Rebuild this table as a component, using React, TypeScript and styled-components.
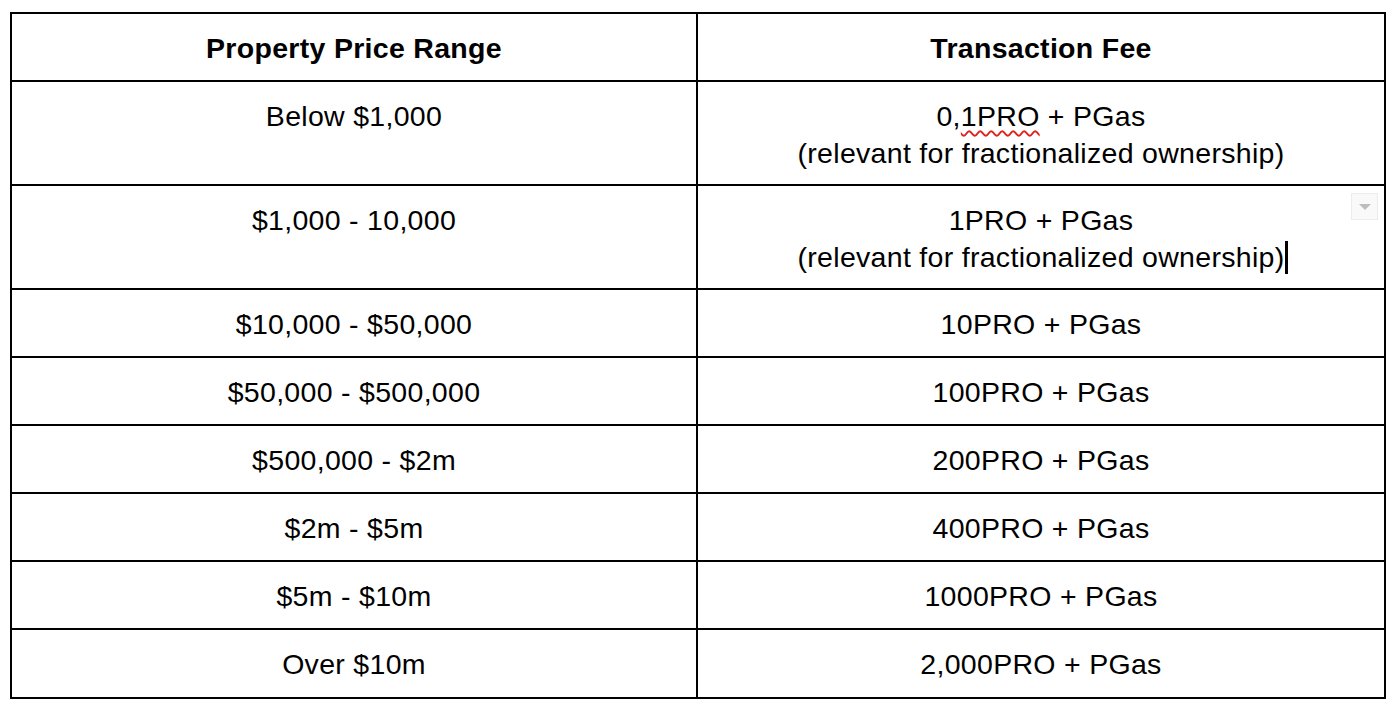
import styled, { createGlobalStyle } from "styled-components";

const Global = createGlobalStyle`
  html, body {
    margin: 0;
    background: #ffffff;
  }
  body {
    font-family: "Liberation Sans", Arial, Helvetica, sans-serif;
    color: #000;
  }
`;

const Page = styled.div`
  padding: 12px 0 0 10px;
`;

const Table = styled.table`
  border-collapse: collapse;
  table-layout: fixed;
  width: 1374px;
  font-size: 28.5px;
  letter-spacing: 0.3px;
  line-height: 37px;
`;

const Row = styled.tr<{ h: number }>`
  height: ${p => p.h}px;
`;

const Cell = styled.td`
  position: relative;
  border: 2px solid #000;
  padding: 16px 4px 0;
  text-align: center;
  vertical-align: top;
  white-space: nowrap;
`;

const HeadCell = styled.th`
  border: 2px solid #000;
  padding: 16px 4px 0;
  text-align: center;
  vertical-align: top;
  font-weight: bold;
`;

// spell-check underline
const Squiggle = styled.span`
  text-decoration: underline wavy #e0201b;
  text-decoration-thickness: 1.5px;
  text-underline-offset: 4px;
`;

const Caret = styled.span`
  display: inline-block;
  width: 3px;
  height: 33px;
  background: #000;
  vertical-align: -7px;
  margin-left: 1px;
  margin-right: -4px;
`;

const MenuToggle = styled.div`
  position: absolute;
  right: 6px;
  top: 7px;
  width: 27px;
  height: 27px;
  box-sizing: border-box;
  border: 1px solid #ececec;
  background: #f9f9f9;
  display: flex;
  align-items: center;
  justify-content: center;
  &::after {
    content: "";
    border-left: 6px solid transparent;
    border-right: 6px solid transparent;
    border-top: 6px solid #bdbdbd;
    margin-top: 1px;
  }
`;

const rows: { range: string; fee: string; h: number }[] = [
  { range: "$10,000 - $50,000", fee: "10PRO + PGas", h: 68 },
  { range: "$50,000 - $500,000", fee: "100PRO + PGas", h: 68 },
  { range: "$500,000 - $2m", fee: "200PRO + PGas", h: 68 },
  { range: "$2m - $5m", fee: "400PRO + PGas", h: 68 },
  { range: "$5m - $10m", fee: "1000PRO + PGas", h: 68 },
  { range: "Over $10m", fee: "2,000PRO + PGas", h: 69 },
];

export default function App() {
  return (
    <Page>
      <Global />
      <Table>
        <colgroup>
          <col style={{ width: 686 }} />
          <col style={{ width: 688 }} />
        </colgroup>
        <thead>
          <Row h={68}>
            <HeadCell>Property Price Range</HeadCell>
            <HeadCell>Transaction Fee</HeadCell>
          </Row>
        </thead>
        <tbody>
          <Row h={104}>
            <Cell>Below $1,000</Cell>
            <Cell>
              0,<Squiggle>1PRO</Squiggle> + PGas
              <br />
              (relevant for fractionalized ownership)
            </Cell>
          </Row>
          <Row h={104}>
            <Cell>$1,000 - 10,000</Cell>
            <Cell>
              1PRO + PGas
              <br />
              (relevant for fractionalized ownership)
              <Caret />
              <MenuToggle />
            </Cell>
          </Row>
          {rows.map(r => (
            <Row key={r.range} h={r.h}>
              <Cell>{r.range}</Cell>
              <Cell>{r.fee}</Cell>
            </Row>
          ))}
        </tbody>
      </Table>
    </Page>
  );
}
